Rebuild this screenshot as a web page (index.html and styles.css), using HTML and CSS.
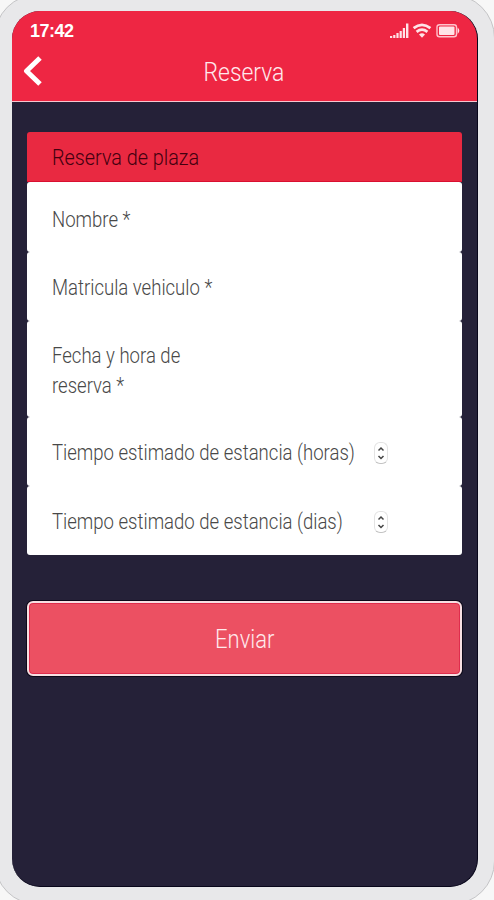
FILE: index.html
```
<!DOCTYPE html>
<html lang="es">
<head>
  <meta charset="UTF-8" />
  <meta name="viewport" content="width=device-width, initial-scale=1.0"/>
  <title>Reserva</title>
  <link rel="stylesheet" href="styles.css">
</head>
<body>
  <div class="phone">
    <div class="screen">
      <header class="top">
        <div class="status">
          <span class="time">17:42</span>
          <svg class="status-icons" width="72" height="18" viewBox="0 0 72 18" fill="#ffe3e7">
            <path d="M1 14h2.200v2H1zM4.200 13h2.200v3H4.200zM7.400 11h2.200v5H7.400zM10.600 9h2.200v7h-2.200zM13.800 6h2.200v10h-2.200zM17 1.500h2.400V16H17z"/>
            <g fill="none" stroke="#ffe3e7" stroke-width="2.800">
              <path d="M24.600 6.200q8.400-6.600 16.800 0"/>
              <path d="M27.600 9.800q5.400-4.300 10.800 0"/>
            </g>
            <path d="M30 12.400q3-2.400 6 0l-3 3.400z"/>
            <rect x="48" y="2.800" width="19.500" height="12" rx="2.500" fill="none" stroke="#ffc2cb" stroke-width="1.400"/>
            <rect x="50" y="4.600" width="15.500" height="8.400" rx="1"/>
            <path d="M68.600 5.500q3.400 3.200 0 6.400z"/>
          </svg>
        </div>
        <div class="navbar">
          <svg class="back" width="20" height="32" viewBox="0 0 20 32">
            <path d="M17 2L3.500 15L17 28" fill="none" stroke="#fff" stroke-width="5" stroke-linejoin="round"/>
          </svg>
          <h1><span class="txt">Reserva</span></h1>
        </div>
      </header>

      <form class="form">
        <div class="card-title"><span class="txt">Reserva de plaza</span></div>
        <div class="row row-first"><label class="txt">Nombre *</label></div>
        <div class="row"><label class="txt">Matricula vehiculo *</label></div>
        <div class="row row-tall"><label class="txt">Fecha y hora de<br>reserva *</label></div>
        <div class="row">
          <label class="txt">Tiempo estimado de estancia (horas)</label>
          <span class="stepper">
            <svg width="12" height="20" viewBox="0 0 12 20"><path d="M3.500 7.500L6 5L8.500 7.500M3.500 13L6 15.500L8.500 13"/></svg>
          </span>
        </div>
        <div class="row">
          <label class="txt">Tiempo estimado de estancia (dias)</label>
          <span class="stepper">
            <svg width="12" height="20" viewBox="0 0 12 20"><path d="M3.500 7.500L6 5L8.500 7.500M3.500 13L6 15.500L8.500 13"/></svg>
          </span>
        </div>
        <button class="send" type="button"><span class="txt">Enviar</span></button>
      </form>
    </div>
  </div>
</body>
</html>
```
FILE: styles.css
```
* {
  box-sizing: border-box;
}
body {
  margin: 0;
  height: 900px;
  overflow: hidden;
  background-color: #f7f7f7;
  font-family: Roboto, "Liberation Sans", sans-serif;
  font-weight: 300;
}
.phone {
  width: 501px;
  height: 911px;
  margin: -6px 0 0 -6px;
  padding: 16px 17px;
  background-color: #e8e8ea;
  border: 1px solid #c4c4c6;
  border-radius: 44px;
}
.screen {
  width: 466px;
  height: 876px;
  overflow: hidden;
  background-color: #252138;
  border: solid #08061a;
  border-width: 0 1px 1px 0;
  border-radius: 28px;
}
.top {
  height: 91px;
  background-color: #ee2643;
  border-bottom: 1px solid #f6c6cf;
}
.status {
  display: flex;
  justify-content: space-between;
  align-items: center;
  height: 40px;
  padding: 0 16px 0 18px;
}
.time {
  color: #fff;
  font-family: "Liberation Sans", sans-serif;
  font-size: 18px;
  font-weight: bold;
  letter-spacing: -0.5px;
}
.navbar {
  display: grid;
  grid-template-columns: 20px 1fr 20px;
  align-items: center;
  height: 42px;
  padding: 0 12px 0 11px;
}
h1 {
  margin: 0;
  color: #ffe9ec;
  font-size: 26px;
  font-weight: 300;
  line-height: 42px;
  text-align: center;
}
/* condensed lettering */
.txt {
  display: inline-block;
  transform: scaleX(0.88);
  transform-origin: left center;
  white-space: nowrap;
}
h1 .txt,
.send .txt {
  transform-origin: center;
}
.form {
  padding: 30px 15px 0;
}
.card-title {
  height: 50px;
  padding-left: 25px;
  background-color: #e92941;
  border-bottom: 1px solid #d90f31;
  border-radius: 3px 3px 0 0;
  color: #43000f;
  font-size: 22px;
  line-height: 51px;
}
.card-title .txt {
  transform: scaleX(0.9);
}
.row {
  display: flex;
  justify-content: space-between;
  align-items: center;
  height: 68.700px;
  padding: 3px 74px 0 25px;
  background-color: #fff;
  border-radius: 3px;
  color: #484848;
  font-size: 21.500px;
  line-height: 30px;
}
.row label {
  width: 0;
  transform: scaleX(0.863);
}
.row-first {
  height: 70px;
  padding-top: 5px;
}
.row-tall {
  height: 96.600px;
  padding-top: 4px;
}
.stepper {
  display: flex;
  justify-content: center;
  width: 14px;
  height: 22px;
  border: 1px solid #e3e3e3;
  border-bottom-color: #c4c4c4;
  border-radius: 6px;
}
.stepper svg {
  flex: none;
  fill: none;
  stroke: #444;
  stroke-width: 1.500;
}
.send {
  display: block;
  width: 100%;
  height: 75px;
  margin-top: 46px;
  padding: 2px 0 0;
  background-color: #ec5062;
  border: 2px solid #f7dfe2;
  border-radius: 6px;
  box-shadow: 0 0 0 1px #0b0818, inset 0 0 0 1px #df2d4d;
  color: #ffe9ec;
  font-family: inherit;
  font-size: 25px;
  font-weight: 300;
}
```
